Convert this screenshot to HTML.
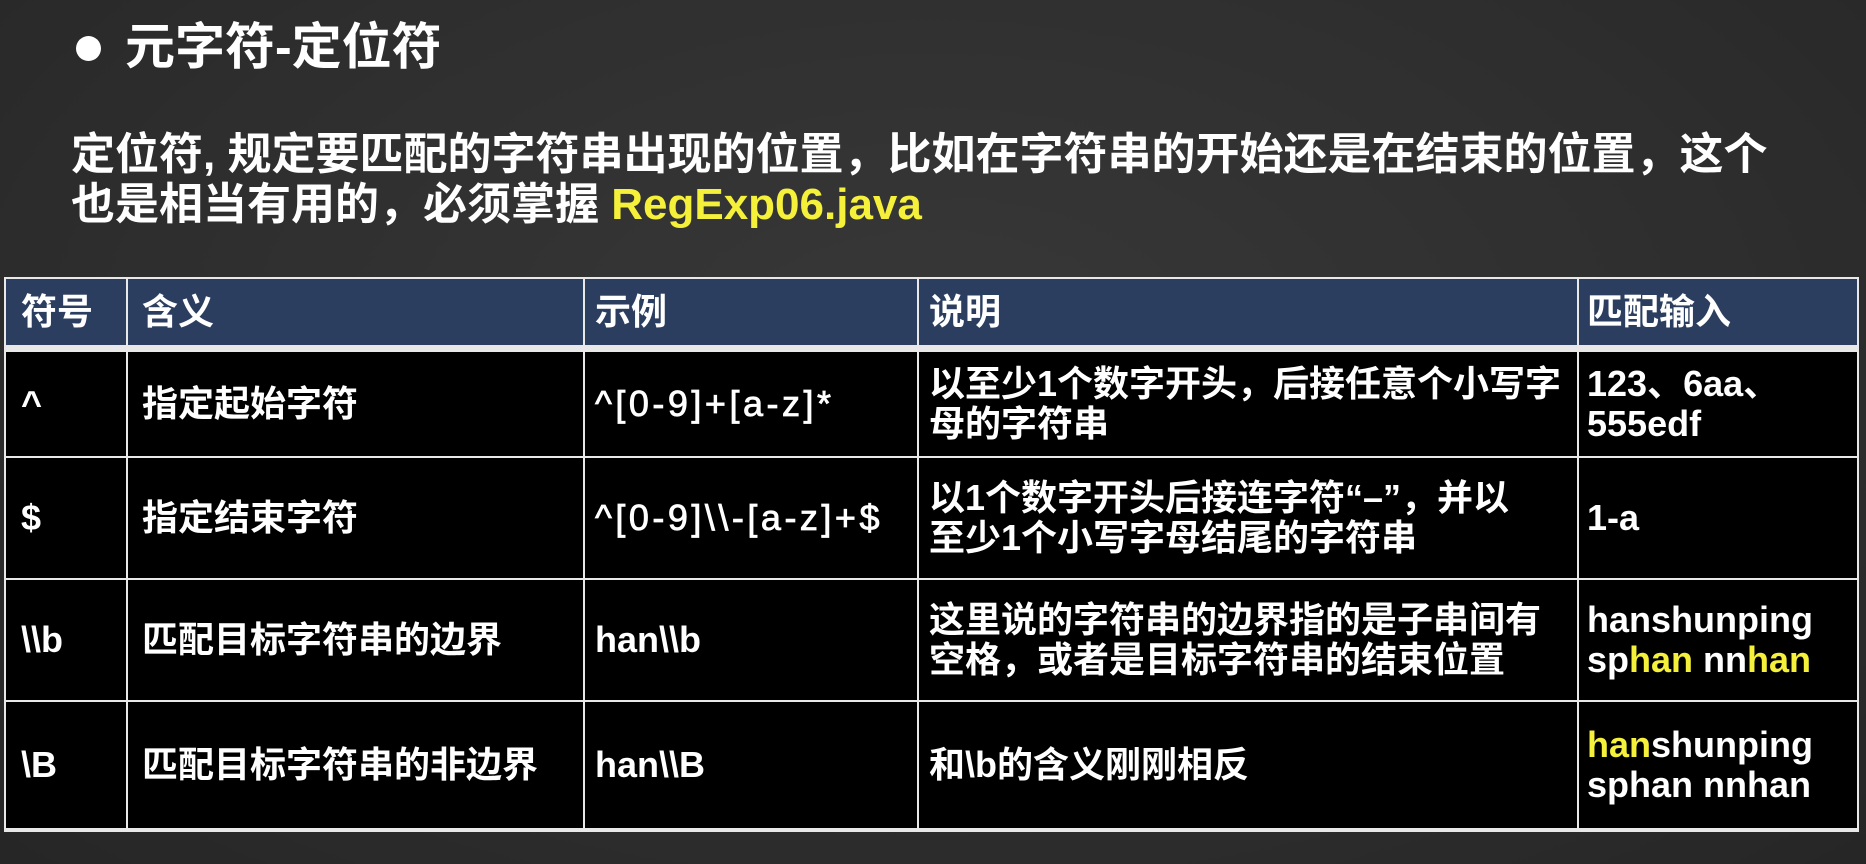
<!DOCTYPE html>
<html><head><meta charset="utf-8"><style>
body{margin:0;width:1866px;height:864px;overflow:hidden;background:#2f2f2f;
background:radial-gradient(ellipse at 50% 40%,#383838 0%,#2e2e2e 60%,#262626 100%);
font-family:"Liberation Sans","Noto Sans CJK SC",sans-serif;font-weight:bold;color:#fff;position:relative}
.t{position:absolute;white-space:nowrap}
#tb{position:absolute;left:4px;top:277px;width:1855px;height:555px;background:#e8e8e8}
.c{position:absolute;background:#000;font-size:36px;line-height:40px;display:flex;align-items:center;box-sizing:border-box;white-space:nowrap}
.h{background:#2c3e60}
.y{color:#f5f03a}
.ex{font-weight:normal;-webkit-text-stroke:0.8px #fff;letter-spacing:3.5px}
</style></head><body>
<div class="t" style="left:76px;top:36px;width:25px;height:25px;border-radius:50%;background:#fff"></div>
<div class="t" style="left:125px;top:18px;font-size:50px;line-height:58px">元字符-定位符</div>
<div class="t" style="left:71px;top:130px;font-size:44px;line-height:50px">定位符, 规定要匹配的字符串出现的位置，比如在字符串的开始还是在结束的位置，这个<br>也是相当有用的，必须掌握 <span class="y">RegExp06.java</span></div>
<div id="tb">
<div class="c h" style="left:2px;top:2px;width:120px;height:66px;padding-left:15px">符号</div>
<div class="c h" style="left:124px;top:2px;width:455px;height:66px;padding-left:14px">含义</div>
<div class="c h" style="left:581px;top:2px;width:332px;height:66px;padding-left:10px">示例</div>
<div class="c h" style="left:915px;top:2px;width:658px;height:66px;padding-left:10px">说明</div>
<div class="c h" style="left:1575px;top:2px;width:278px;height:66px;padding-left:8px">匹配输入</div>
<div class="c" style="left:2px;top:75px;width:120px;height:104px;padding-left:15px">^</div>
<div class="c" style="left:124px;top:75px;width:455px;height:104px;padding-left:14px">指定起始字符</div>
<div class="c ex" style="left:581px;top:75px;width:332px;height:104px;padding-left:10px">^[0-9]+[a-z]*</div>
<div class="c" style="left:915px;top:75px;width:658px;height:104px;padding-left:10px"><span>以至少1个数字开头，后接任意个小写字<br>母的字符串</span></div>
<div class="c" style="left:1575px;top:75px;width:278px;height:104px;padding-left:8px"><span>123、6aa、<br>555edf</span></div>
<div class="c" style="left:2px;top:181px;width:120px;height:120px;padding-left:15px">$</div>
<div class="c" style="left:124px;top:181px;width:455px;height:120px;padding-left:14px">指定结束字符</div>
<div class="c ex" style="left:581px;top:181px;width:332px;height:120px;padding-left:10px">^[0-9]\\-[a-z]+$</div>
<div class="c" style="left:915px;top:181px;width:658px;height:120px;padding-left:10px"><span>以1个数字开头后接连字符“–”，并以<br>至少1个小写字母结尾的字符串</span></div>
<div class="c" style="left:1575px;top:181px;width:278px;height:120px;padding-left:8px">1-a</div>
<div class="c" style="left:2px;top:303px;width:120px;height:120px;padding-left:15px">\\b</div>
<div class="c" style="left:124px;top:303px;width:455px;height:120px;padding-left:14px">匹配目标字符串的边界</div>
<div class="c" style="left:581px;top:303px;width:332px;height:120px;padding-left:10px">han\\b</div>
<div class="c" style="left:915px;top:303px;width:658px;height:120px;padding-left:10px"><span>这里说的字符串的边界指的是子串间有<br>空格，或者是目标字符串的结束位置</span></div>
<div class="c" style="left:1575px;top:303px;width:278px;height:120px;padding-left:8px"><span>hanshunping<br>sp<span class="y">han</span> nn<span class="y">han</span></span></div>
<div class="c" style="left:2px;top:425px;width:120px;height:126px;padding-left:15px">\B</div>
<div class="c" style="left:124px;top:425px;width:455px;height:126px;padding-left:14px">匹配目标字符串的非边界</div>
<div class="c" style="left:581px;top:425px;width:332px;height:126px;padding-left:10px">han\\B</div>
<div class="c" style="left:915px;top:425px;width:658px;height:126px;padding-left:10px">和\b的含义刚刚相反</div>
<div class="c" style="left:1575px;top:425px;width:278px;height:126px;padding-left:8px"><span><span class="y">han</span>shunping<br>sphan nnhan</span></div>
</div>
</body></html>
